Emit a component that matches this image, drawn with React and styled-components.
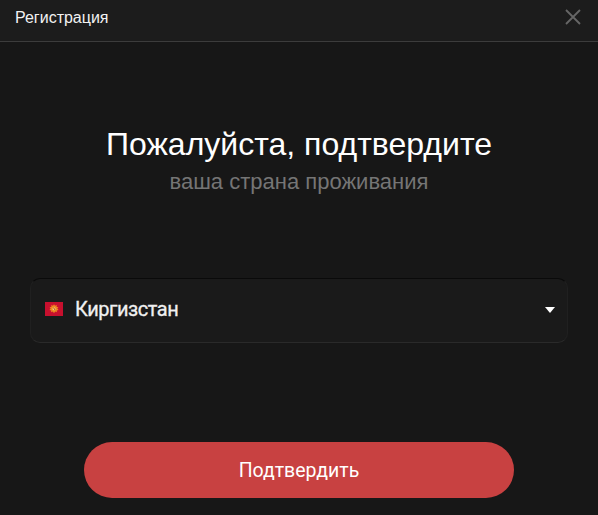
import React from "react";
import styled, { createGlobalStyle } from "styled-components";

const Global = createGlobalStyle`
  html, body { margin: 0; padding: 0; background: #171717; }
`;

const Modal = styled.div`
  width: 598px;
  height: 515px;
  display: flex;
  flex-direction: column;
  background: #171717;
  color: #fff;
  font-family: "Liberation Sans", Arial, sans-serif;
  overflow: hidden;
`;

const Header = styled.header`
  height: 41px;
  flex: none;
  display: flex;
  align-items: center;
  justify-content: space-between;
  padding: 0 17px 0 15px;
  background: #1c1c1c;
  border-bottom: 1px solid #3c3c3c;
`;

const Title = styled.h1`
  margin: 0 0 6px;
  font-size: 16px;
  line-height: 18px;
  font-weight: 400;
  color: #f2f2f2;
`;

const Close = styled.button`
  width: 16px;
  height: 16px;
  padding: 0;
  border: 0;
  background: none;
  display: block;
  color: #666;
  margin-bottom: 7px;
`;

const Body = styled.main`
  flex: 1;
  display: flex;
  flex-direction: column;
  align-items: center;
  padding: 85px 30px 0;
`;

const Heading = styled.h2`
  margin: 0;
  font-size: 32px;
  line-height: 34px;
  font-weight: 400;
  color: #fff;
`;

const Sub = styled.p`
  margin: 8px 0 0;
  font-size: 22px;
  line-height: 25px;
  color: #757575;
`;

const Select = styled.div`
  align-self: stretch;
  height: 65px;
  box-sizing: border-box;
  margin-top: 84px;
  padding: 0 11px 3px 14px;
  display: flex;
  align-items: center;
  background: #1a1a1a;
  border-radius: 10px;
  border: 1px solid #202020;
  border-top-color: #0a0a0a;
  border-bottom-color: #2a2a2a;
`;

const Flag = styled.svg`
  width: 18px;
  height: 14px;
  flex: none;
  margin-right: 12px;
`;

const Country = styled.span`
  flex: 1;
  font-family: Roboto, "Liberation Sans", sans-serif;
  font-size: 20px;
  letter-spacing: -0.45px;
  font-weight: 400;
  -webkit-text-stroke: 0.3px #f0f0f0;
  color: #f0f0f0;
`;

const Caret = styled.span`
  width: 0;
  height: 0;
  margin: 2px 1px 0 0;
  border-left: 5px solid transparent;
  border-right: 5px solid transparent;
  border-top: 6px solid #fff;
`;

const Confirm = styled.button`
  width: 430px;
  height: 56px;
  flex: none;
  margin-top: 99px;
  border: 0;
  border-radius: 28px;
  background: #c84141;
  color: #fff;
  font-family: Roboto, "Liberation Sans", sans-serif;
  font-size: 19.5px;
  font-weight: 400;
`;

export default function App() {
  return (
    <>
      <Global />
      <Modal>
        <Header>
          <Title>Регистрация</Title>
          <Close aria-label="Закрыть">
            <svg width="16" height="16" viewBox="0 0 16 16" fill="none" stroke="currentColor" strokeWidth="1.8">
              <path d="M1 1 15 15M15 1 1 15" />
            </svg>
          </Close>
        </Header>
        <Body>
          <Heading>Пожалуйста, подтвердите</Heading>
          <Sub>ваша страна проживания</Sub>
          <Select>
            <Flag viewBox="0 0 18 14">
              <rect width="18" height="14" fill="#c8102e" />
              <path
                d="M9 2.2 10 3.8 11.7 3 11.6 4.9 13.5 5.2 12.3 6.6 13.6 8 11.7 8.4 11.9 10.3 10.1 9.6 9 11.2 7.9 9.6 6.1 10.3 6.3 8.4 4.4 8 5.7 6.6 4.5 5.2 6.4 4.9 6.3 3 8 3.8Z"
                fill="#ee8a22"
              />
              <circle cx="9" cy="6.8" r="1.5" fill="#f4d27a" />
              <path d="M8.6 5.6 9.8 7.9" stroke="#a5241c" strokeWidth="0.8" />
            </Flag>
            <Country>Киргизстан</Country>
            <Caret />
          </Select>
          <Confirm>Подтвердить</Confirm>
        </Body>
      </Modal>
    </>
  );
}
